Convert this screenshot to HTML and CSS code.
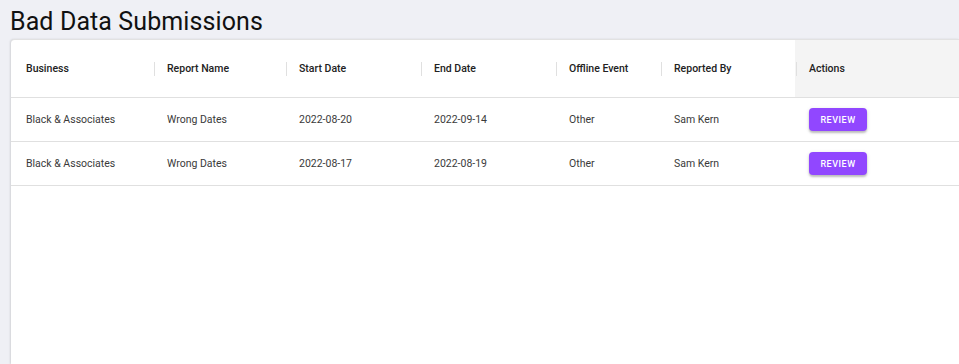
FILE: index.html
```html
<!DOCTYPE html>
<html lang="en">
<head>
    <meta charset="UTF-8">
    <meta name="viewport" content="width=device-width, initial-scale=1.0">
    <title>Bad Data Submissions</title>
    <link rel="stylesheet" href="styles.css">
</head>
<body>

<h1 class="page-title">Bad Data Submissions</h1>

<div class="card">
    <div class="grid">
        <!-- Header -->
        <div class="head first sep">Business</div>
        <div class="head sep">Report Name</div>
        <div class="head sep">Start Date</div>
        <div class="head sep">End Date</div>
        <div class="head sep">Offline Event</div>
        <div class="head sep">Reported By</div>
        <div class="head actions">Actions</div>

        <!-- Row 1 -->
        <div class="cell first">Black &amp; Associates</div>
        <div class="cell">Wrong Dates</div>
        <div class="cell">2022-08-20</div>
        <div class="cell">2022-09-14</div>
        <div class="cell">Other</div>
        <div class="cell">Sam Kern</div>
        <div class="cell action-cell"><button class="review-btn">Review</button></div>

        <!-- Row 2 -->
        <div class="cell first">Black &amp; Associates</div>
        <div class="cell">Wrong Dates</div>
        <div class="cell">2022-08-17</div>
        <div class="cell">2022-08-19</div>
        <div class="cell">Other</div>
        <div class="cell">Sam Kern</div>
        <div class="cell action-cell"><button class="review-btn">Review</button></div>
    </div>
</div>

</body>
</html>
```

FILE: styles.css
```css
* { margin: 0; padding: 0; box-sizing: border-box; }
body { font-family: Roboto, 'Liberation Sans', sans-serif; background-color: #eff0f5; height: 364px; overflow: hidden; }

/* Title */
.page-title { font-size: 25px; font-weight: 400; line-height: 28px; color: #111; padding: 8px 0 0 10px; height: 36px; letter-spacing: 0.1px; }

/* Card holding the grid */
.card {
    margin: 3px 0 0 11px;
    background-color: #fff;
    border-top-left-radius: 4px;
    border-top: 1px solid #e2e2e2;
    box-shadow: -1px 0 2px rgba(0, 0, 0, 0.12);
    height: 325px;
}

/* Data grid */
.grid { display: grid; grid-template-columns: 144px 132px 135px 135px 105px 135px 1fr; }
.head {
    position: relative;
    height: 58px;
    display: flex;
    align-items: center;
    padding-left: 12px;
    font-size: 10.5px;
    font-weight: 500;
    color: #222;
    border-bottom: 1px solid #e0e0e0;
}
.head.sep::after {
    content: '';
    position: absolute;
    right: 0;
    top: 22px;
    width: 1px;
    height: 14px;
    background-color: #e0e0e0;
    z-index: 1;
}
.head.actions { background-color: #f4f4f4; margin-left: -2px; padding-left: 14px; }
.first { padding-left: 15px; }

.cell {
    height: 44px;
    display: flex;
    align-items: center;
    padding-left: 12px;
    font-size: 10.5px;
    color: #3a3a3a;
    border-bottom: 1px solid #e0e0e0;
}
.cell.first { padding-left: 15px; }

/* Review button */
.review-btn {
    width: 58px;
    height: 23px;
    background-color: #9147ff;
    color: #fff;
    border: none;
    border-radius: 4px;
    font-family: Roboto, 'Liberation Sans', sans-serif;
    font-size: 9px;
    font-weight: 500;
    letter-spacing: 0.5px;
    text-transform: uppercase;
    box-shadow: 0 2px 2px rgba(0, 0, 0, 0.2), 0 1px 4px rgba(0, 0, 0, 0.12);
    cursor: pointer;
}
.review-btn:hover { background-color: #7a30e6; }
```
